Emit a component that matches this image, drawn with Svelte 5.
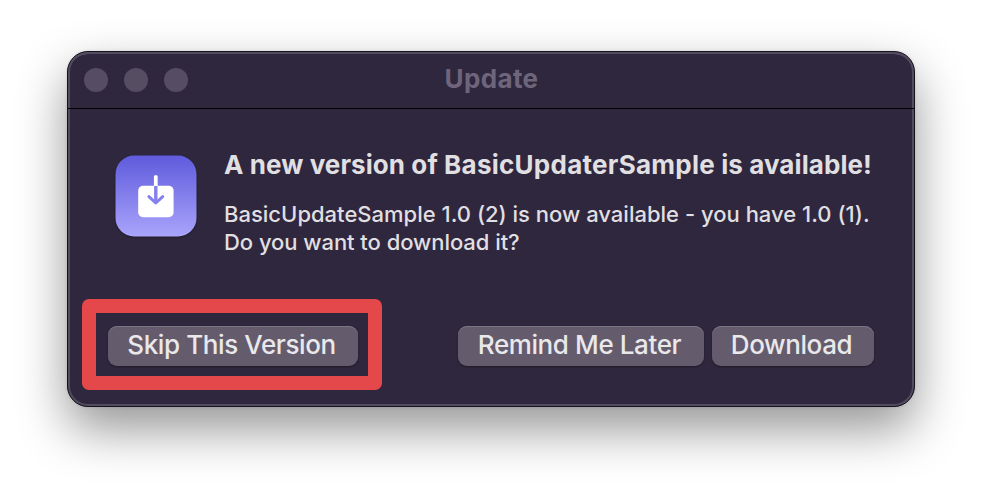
<script>
  const laterActions = ['Remind Me Later', 'Download'];
</script>

<main>
  <section class="window">
    <header>
      <div class="lights"><i></i><i></i><i></i></div>
      <h1>Update</h1>
    </header>
    <div class="content">
      <svg class="app-icon" width="82" height="82" viewBox="0 0 82 82">
        <defs>
          <linearGradient id="tile" x1="0" y1="0" x2="0" y2="1">
            <stop offset="0" stop-color="#5f5bdc" />
            <stop offset="1" stop-color="#a9a4fb" />
          </linearGradient>
        </defs>
        <rect x="0.5" y="0.5" width="81" height="81" rx="18.5" fill="url(#tile)" />
        <rect x="23.2" y="30.8" width="35.4" height="31.4" rx="4.8" fill="#fff" />
        <path d="M40.8 21.8V31" stroke="#fff" stroke-width="3.8" stroke-linecap="round" />
        <path d="M40.8 31V48" fill="none" stroke="#8480ec" stroke-width="3.4" />
        <path d="M33.9 41.6L40.8 48L47.7 41.6" fill="none" stroke="#8480ec" stroke-width="3" stroke-linecap="round" stroke-linejoin="round" />
      </svg>
      <div class="message">
        <h2>A new version of <span class="product">BasicUpdaterSample</span> is available!</h2>
        <p>
          <span class="first">BasicUpdateSample 1.0 (2) is now available - you have 1.0 (1).</span><br />
          <span class="second">Do you want to download it?</span>
        </p>
      </div>
    </div>
    <footer>
      <div class="highlight"><button class="skip">Skip This Version</button></div>
      <div class="actions">
        {#each laterActions as label, i}
          <button class={i === 0 ? 'remind' : 'download'}>{label}</button>
        {/each}
      </div>
    </footer>
  </section>
</main>

<style>
  :global(body) { background: #fff; overflow: hidden; }
  main {
    box-sizing: border-box;
    width: 982px;
    height: 490px;
    padding: 51px 67px 0;
    overflow: hidden;
    font-family: Inter, "Liberation Sans", sans-serif;
    -webkit-font-smoothing: antialiased;
  }
  .window {
    box-sizing: border-box;
    width: 848px;
    height: 356px;
    border: 1px solid #17131d;
    border-radius: 21px;
    background: #2f273d;
    box-shadow: inset 0 0 0 2px #534b60, inset 0 2px 0 #706979, 0 22px 50px rgba(0, 0, 0, 0.42), 0 0 3px rgba(0, 0, 0, 0.12);
  }
  header {
    box-sizing: border-box;
    position: relative;
    height: 57px;
    border-bottom: 1px solid #000;
    display: flex;
    align-items: center;
    justify-content: center;
  }
  .lights { position: absolute; left: 16px; top: 16px; display: flex; gap: 16px; }
  .lights i { width: 24px; height: 24px; border-radius: 50%; background: #564d62; }
  h1 { margin: 0; padding: 0 0 2px 1px; font-size: 26px; line-height: 32px; font-weight: 700; color: #6e657c; letter-spacing: 0.35px; }
  .content { display: flex; padding: 46px 0 0 47px; height: 143px; }
  .app-icon { flex: none; filter: drop-shadow(0 1px 1px rgba(0, 0, 0, 0.35)); }
  .message { padding-left: 27px; white-space: nowrap; color: #e0dfe2; }
  h2 { margin: -6px 0 0; font-size: 26px; line-height: 32px; font-weight: 700; letter-spacing: 0.08px; }
  .product { letter-spacing: 0.26px; }
  p { margin: 19px 0 0; font-size: 22px; line-height: 28px; font-weight: 450; }
  .first { letter-spacing: 0.01px; }
  .second { letter-spacing: -0.05px; }
  footer { display: flex; justify-content: space-between; padding: 1px 40px 0 14px; }
  .highlight {
    box-sizing: border-box;
    width: 300px;
    height: 91px;
    border: 14px solid #e5484b;
    border-radius: 7px;
    padding: 13px 0 0 12px;
  }
  .actions { display: flex; gap: 8px; padding-top: 27px; }
  button {
    display: block;
    height: 40px;
    padding: 0 3px 3px 0;
    border: 0;
    border-radius: 9px;
    background: #645c6d;
    color: #e9e8eb;
    font: 450 26px/37px Inter, "Liberation Sans", sans-serif;
    letter-spacing: -0.4px;
    white-space: nowrap;
    box-shadow: inset 0 1px 0 #7c7584, 0 1px 2px rgba(0, 0, 0, 0.35);
  }
  .skip { width: 250px; }
  .remind { width: 246px; }
  .download { width: 162px; }
</style>
